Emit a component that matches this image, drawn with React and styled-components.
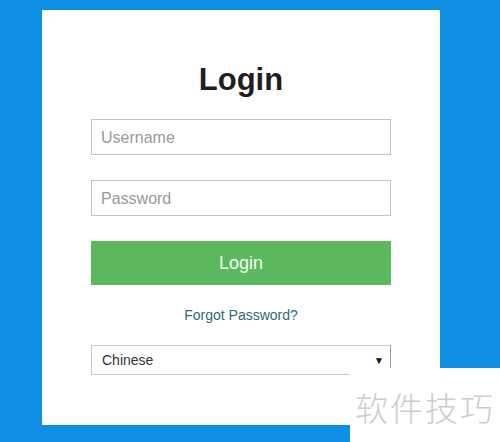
import React from "react";
import styled, { createGlobalStyle } from "styled-components";

const Global = createGlobalStyle`
  html, body { margin: 0; padding: 0; }
  body {
    background: #0e8fe3;
    font-family: "Liberation Sans", Arial, sans-serif;
    width: 500px;
    height: 442px;
    overflow: hidden;
  }
  #root { position: relative; width: 500px; height: 442px; }
`;

const Page = styled.div`
  width: 500px;
  height: 442px;
  padding: 10px 0 0 42px;
  box-sizing: border-box;
`;

const Card = styled.div`
  width: 398px;
  height: 415px;
  background: #ffffff;
  box-sizing: border-box;
  padding: 51px 49px 0;
  display: flex;
  flex-direction: column;
`;

const Title = styled.h1`
  margin: 0;
  font-size: 31px;
  line-height: 37px;
  font-weight: 700;
  color: #1f1f1f;
  text-align: center;
`;

const Input = styled.input`
  display: block;
  width: 300px;
  height: 36px;
  box-sizing: border-box;
  margin: ${(p) => p.$mt}px 0 0;
  padding: 1px 9px 0;
  border: 1px solid #c4c4c4;
  border-radius: 0;
  background: #fff;
  font-family: "Liberation Sans", Arial, sans-serif;
  font-size: 16px;
  color: #333;
  outline: none;
  &::placeholder { color: #9a9a9a; }
`;

const Button = styled.button`
  display: block;
  width: 300px;
  height: 44px;
  margin-top: 25px;
  border: none;
  border-radius: 0;
  background: #5cb85c;
  color: #f4fff4;
  font-family: "Liberation Sans", Arial, sans-serif;
  font-size: 18px;
  cursor: pointer;
`;

const Forgot = styled.a`
  display: block;
  margin-top: 22px;
  font-size: 14px;
  line-height: 16px;
  color: #2f6a7a;
  text-align: center;
  text-decoration: none;
`;

const SelectBox = styled.div`
  position: relative;
  margin-top: 22px;
  width: 300px;
  height: 30px;
  box-sizing: border-box;
  border: 1px solid #c8c8c8;
  border-right-color: #9a9a9a;
  display: flex;
  align-items: center;
  padding: 0 0 0 10px;
  font-size: 14px;
  color: #333;
`;

const SelectText = styled.span`
  flex: 1;
`;

const Arrow = styled.span`
  font-size: 10px;
  color: #111;
  margin-right: 6px;
`;

const Watermark = styled.div`
  position: absolute;
  right: 0;
  bottom: 0;
  width: 150px;
  height: 74px;
  background: #fff;
  display: flex;
  align-items: center;
  justify-content: center;
  padding-top: 4px;
  box-sizing: border-box;
  font-family: "Noto Sans CJK SC", sans-serif;
  font-weight: 300;
  font-size: 33px;
  letter-spacing: 2px;
  color: #cdcdcd;
`;

export default function App() {
  return (
    <>
      <Global />
      <Page>
        <Card>
          <Title>Login</Title>
          <Input $mt={21} placeholder="Username" />
          <Input $mt={25} type="password" placeholder="Password" />
          <Button>Login</Button>
          <Forgot href="#">Forgot Password?</Forgot>
          <SelectBox>
            <SelectText>Chinese</SelectText>
            <Arrow>▼</Arrow>
          </SelectBox>
        </Card>
      </Page>
      <Watermark>软件技巧</Watermark>
    </>
  );
}
